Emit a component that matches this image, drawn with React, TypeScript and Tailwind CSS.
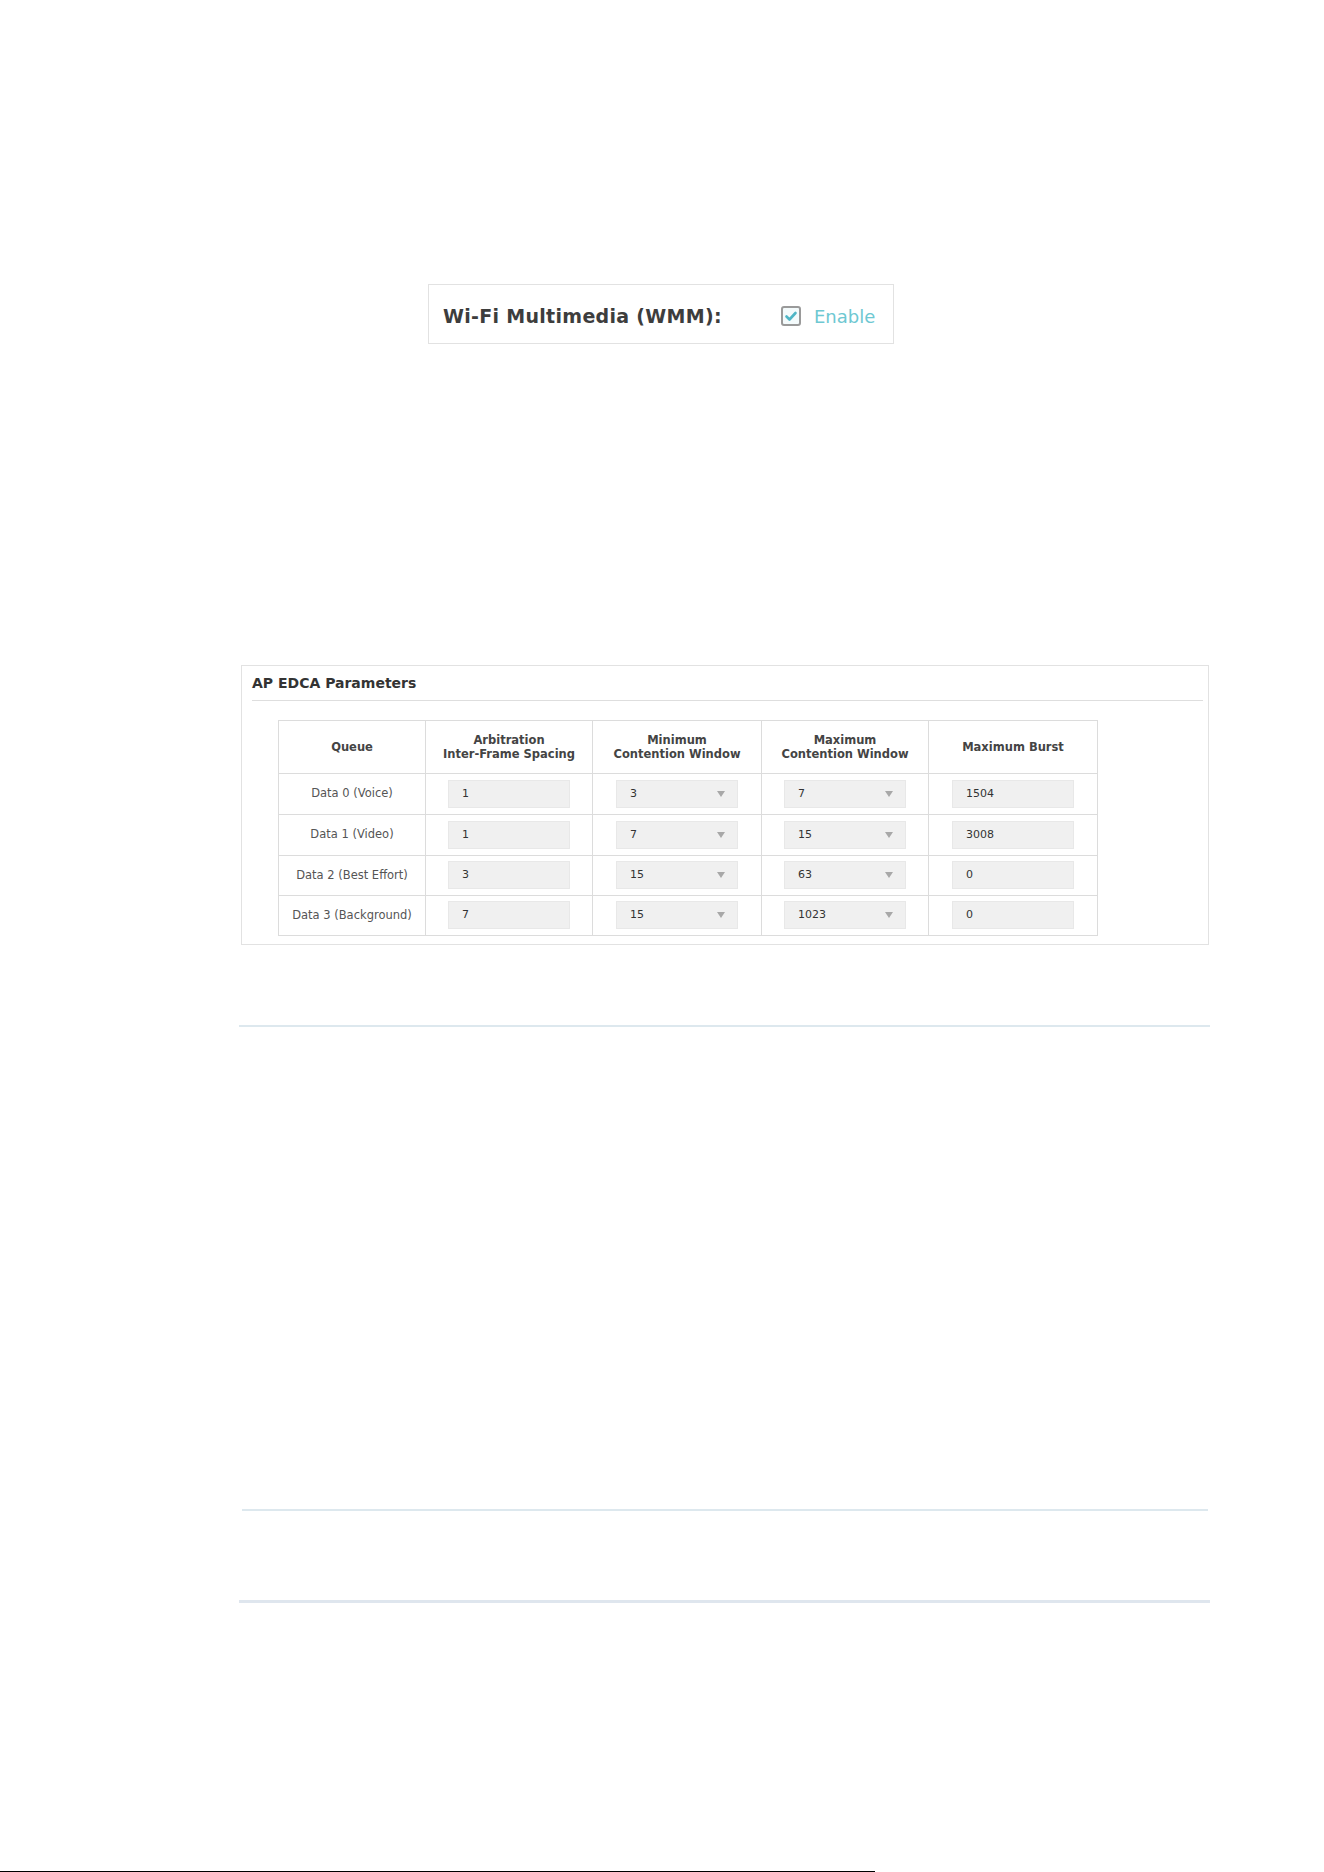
import React from "react";

type Row = {
  queue: string;
  aifs: string;
  cwMin: string;
  cwMax: string;
  burst: string;
  h: string;
};

const rows: Row[] = [
  { queue: "Data 0 (Voice)", aifs: "1", cwMin: "3", cwMax: "7", burst: "1504", h: "h-[41px]" },
  { queue: "Data 1 (Video)", aifs: "1", cwMin: "7", cwMax: "15", burst: "3008", h: "h-[41px]" },
  { queue: "Data 2 (Best Effort)", aifs: "3", cwMin: "15", cwMax: "63", burst: "0", h: "h-[40px]" },
  { queue: "Data 3 (Background)", aifs: "7", cwMin: "15", cwMax: "1023", burst: "0", h: "h-[40px]" },
];

const font = { fontFamily: '"DejaVu Sans", Verdana, sans-serif' };

const TextField = ({ value }: { value: string }) => (
  <div className="w-[122px] h-[28px] bg-[#f0f0f0] border border-[#e8e8e8] flex items-center pl-[13px] text-[11px] text-[#333]">
    {value}
  </div>
);

const SelectField = ({ value }: { value: string }) => (
  <div className="w-[122px] h-[28px] bg-[#f0f0f0] border border-[#e8e8e8] flex items-center justify-between pl-[13px] pr-[12px] text-[11px] text-[#333]">
    <span>{value}</span>
    <svg width="8" height="6" viewBox="0 0 8 6">
      <path d="M0 0 L8 0 L4 6 Z" fill="#a8a8a8" />
    </svg>
  </div>
);

const Cell = ({ children, h }: { children: React.ReactNode; h: string }) => (
  <div className={`${h} border-r border-b border-[#dcdcdc] flex items-center justify-center`}>
    {children}
  </div>
);

const HeadCell = ({ lines }: { lines: string[] }) => (
  <div className="h-[53px] border-r border-b border-[#dcdcdc] flex flex-col items-center justify-center text-[11.5px] leading-[14px] font-bold text-[#444]">
    {lines.map((l) => (
      <span key={l}>{l}</span>
    ))}
  </div>
);

const CheckMark = () => (
  <svg width="20" height="20" viewBox="0 0 20 20">
    <rect x="1" y="1" width="18" height="18" rx="2" fill="#f4fbfc" stroke="#9a9a9a" strokeWidth="2" />
    <path d="M5.5 10.5 L8.5 13.5 L14.5 7" fill="none" stroke="#4fb6c6" strokeWidth="2.6" strokeLinecap="round" strokeLinejoin="round" />
  </svg>
);

export default function App() {
  return (
    <div className="w-[1324px] h-[1872px] bg-white flex flex-col overflow-hidden" style={font}>
      {/* WMM toggle */}
      <div className="mt-[284px] ml-[428px] w-[466px] h-[60px] border border-[#e2e2e2] flex items-center pl-[14px] pt-[5px]">
        <span className="text-[19px] tracking-[0.3px] font-bold text-[#3d3d3d] w-[338px]">Wi-Fi Multimedia (WMM):</span>
        <CheckMark />
        <span className="ml-[13px] text-[18px] text-[#6ec8d2]">Enable</span>
      </div>

      {/* AP EDCA panel */}
      <div className="mt-[321px] ml-[241px] w-[968px] h-[281px] border border-[#e2e2e2] flex flex-col">
        <div className="mt-[9px] ml-[10px] mr-[5px] pb-[8px] border-b border-[#dedede] text-[14px] font-bold text-[#333] leading-[17px]">
          AP EDCA Parameters
        </div>
        <div className="mt-[19px] ml-[36px] w-[820px] grid grid-cols-[147px_167px_169px_167px_169px] border-t border-l border-[#dcdcdc]">
          <HeadCell lines={["Queue"]} />
          <HeadCell lines={["Arbitration", "Inter-Frame Spacing"]} />
          <HeadCell lines={["Minimum", "Contention Window"]} />
          <HeadCell lines={["Maximum", "Contention Window"]} />
          <HeadCell lines={["Maximum Burst"]} />
          {rows.map((r) => (
            <React.Fragment key={r.queue}>
              <Cell h={r.h}>
                <span className="text-[11.5px] text-[#555]">{r.queue}</span>
              </Cell>
              <Cell h={r.h}>
                <TextField value={r.aifs} />
              </Cell>
              <Cell h={r.h}>
                <SelectField value={r.cwMin} />
              </Cell>
              <Cell h={r.h}>
                <SelectField value={r.cwMax} />
              </Cell>
              <Cell h={r.h}>
                <TextField value={r.burst} />
              </Cell>
            </React.Fragment>
          ))}
        </div>
      </div>

      {/* section rules */}
      <div className="mt-[80px] ml-[239px] w-[971px] h-[2px] bg-[#dde8ee]" />
      <div className="mt-[482px] ml-[242px] w-[966px] h-[2px] bg-[#dde8ee]" />
      <div className="mt-[89px] ml-[239px] w-[971px] h-[3px] bg-[#dfe6ee]" />

      {/* page footer rule */}
      <div className="mt-[268px] w-[875px] h-px bg-black shrink-0" />
    </div>
  );
}
